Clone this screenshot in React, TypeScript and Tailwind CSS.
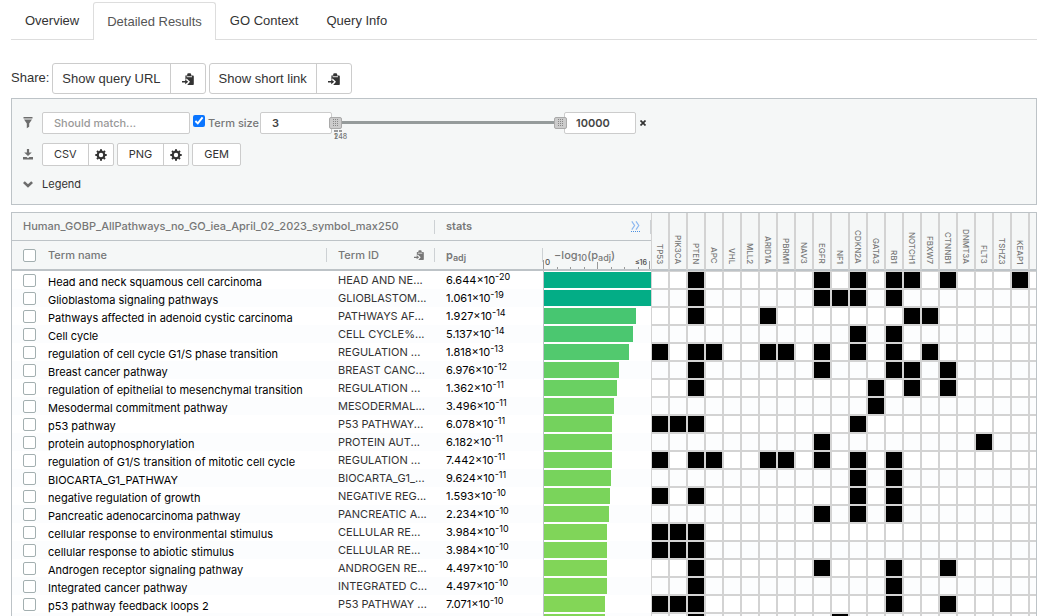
import React, { useState } from 'react';

const genes = [
  'TP53', 'PIK3CA', 'PTEN', 'APC', 'VHL', 'MLL2', 'ARID1A', 'PBRM1', 'NAV3', 'EGFR', 'NF1',
  'CDKN2A', 'GATA3', 'RB1', 'NOTCH1', 'FBXW7', 'CTNNB1', 'DNMT3A', 'FLT3', 'TSHZ3', 'KEAP1',
];

type Row = {
  name: string;
  id: string;
  mantissa: number;
  exponent: number;
  color: string;
  hits: string[];
};

const rows: Row[] = [
  { name: 'Head and neck squamous cell carcinoma', id: 'HEAD AND NE...', mantissa: 6.644, exponent: 20, color: '#03ad86', hits: ['PTEN', 'EGFR', 'CDKN2A', 'RB1', 'NOTCH1', 'CTNNB1', 'KEAP1'] },
  { name: 'Glioblastoma signaling pathways', id: 'GLIOBLASTOM...', mantissa: 1.061, exponent: 19, color: '#03ad86', hits: ['PTEN', 'EGFR', 'NF1', 'CDKN2A', 'RB1'] },
  { name: 'Pathways affected in adenoid cystic carcinoma', id: 'PATHWAYS AF...', mantissa: 1.927, exponent: 14, color: '#47c671', hits: ['PTEN', 'ARID1A', 'NOTCH1', 'FBXW7'] },
  { name: 'Cell cycle', id: 'CELL CYCLE%...', mantissa: 5.137, exponent: 14, color: '#4bc770', hits: ['CDKN2A', 'RB1'] },
  { name: 'regulation of cell cycle G1/S phase transition', id: 'REGULATION ...', mantissa: 1.818, exponent: 13, color: '#52c96e', hits: ['TP53', 'PTEN', 'APC', 'ARID1A', 'PBRM1', 'EGFR', 'CDKN2A', 'RB1', 'FBXW7'] },
  { name: 'Breast cancer pathway', id: 'BREAST CANC...', mantissa: 6.976, exponent: 12, color: '#66ce63', hits: ['PTEN', 'EGFR', 'RB1', 'NOTCH1', 'CTNNB1'] },
  { name: 'regulation of epithelial to mesenchymal transition', id: 'REGULATION ...', mantissa: 1.362, exponent: 11, color: '#6ad062', hits: ['PTEN', 'GATA3', 'NOTCH1', 'CTNNB1'] },
  { name: 'Mesodermal commitment pathway', id: 'MESODERMAL...', mantissa: 3.496, exponent: 11, color: '#70d160', hits: ['GATA3'] },
  { name: 'p53 pathway', id: 'P53 PATHWAY...', mantissa: 6.078, exponent: 11, color: '#74d25d', hits: ['TP53', 'PIK3CA', 'PTEN', 'CDKN2A'] },
  { name: 'protein autophosphorylation', id: 'PROTEIN AUT...', mantissa: 6.182, exponent: 11, color: '#74d25d', hits: ['EGFR', 'FLT3'] },
  { name: 'regulation of G1/S transition of mitotic cell cycle', id: 'REGULATION ...', mantissa: 7.442, exponent: 11, color: '#76d35d', hits: ['TP53', 'PTEN', 'APC', 'ARID1A', 'PBRM1', 'EGFR', 'CDKN2A', 'RB1'] },
  { name: 'BIOCARTA_G1_PATHWAY', id: 'BIOCARTA_G1_...', mantissa: 9.624, exponent: 11, color: '#77d35c', hits: ['CDKN2A', 'RB1'] },
  { name: 'negative regulation of growth', id: 'NEGATIVE REG...', mantissa: 1.593, exponent: 10, color: '#7ad45b', hits: ['TP53', 'PTEN', 'CDKN2A', 'RB1'] },
  { name: 'Pancreatic adenocarcinoma pathway', id: 'PANCREATIC A...', mantissa: 2.234, exponent: 10, color: '#7cd45a', hits: ['EGFR', 'CDKN2A', 'RB1'] },
  { name: 'cellular response to environmental stimulus', id: 'CELLULAR RE...', mantissa: 3.984, exponent: 10, color: '#80d559', hits: ['TP53', 'PIK3CA', 'PTEN'] },
  { name: 'cellular response to abiotic stimulus', id: 'CELLULAR RE...', mantissa: 3.984, exponent: 10, color: '#80d559', hits: ['TP53', 'PIK3CA', 'PTEN'] },
  { name: 'Androgen receptor signaling pathway', id: 'ANDROGEN RE...', mantissa: 4.497, exponent: 10, color: '#81d558', hits: ['PTEN', 'EGFR', 'RB1', 'CTNNB1'] },
  { name: 'Integrated cancer pathway', id: 'INTEGRATED C...', mantissa: 4.497, exponent: 10, color: '#81d558', hits: ['PTEN', 'RB1'] },
  { name: 'p53 pathway feedback loops 2', id: 'P53 PATHWAY ...', mantissa: 7.071, exponent: 10, color: '#83d657', hits: ['TP53', 'PIK3CA', 'PTEN', 'RB1', 'CTNNB1'] },
  { name: '', id: '', mantissa: 7.071, exponent: 10, color: '#83d657', hits: ['PTEN', 'NF1'] },
];

const tabs = ['Overview', 'Detailed Results', 'GO Context', 'Query Info'];

function PasteIcon({ className }: { className: string }) {
  return (
    <svg viewBox="0 0 12 12" className={className} fill="currentColor" aria-hidden="true">
      <path d="M3.4 2.4h1.8V1.6a1.3 1.3 0 0 1 1.3-1.3h1.4a1.3 1.3 0 0 1 1.3 1.3v.8H11a.8.8 0 0 1 .8.8v8a.8.8 0 0 1-.8.8H5.2L8 8.8 4.4 5.2v1.2h-1z" />
      <path d="M0 8h3.2V6.4l3 2.4-3 2.4V9.6H0z" />
      <path d="M4.6 3.3h5.4v.9H4.6z" fill="#fff" />
    </svg>
  );
}

function GearIcon() {
  return (
    <svg viewBox="-6 -6 12 12" className="size-3" fill="none" stroke="currentColor" aria-hidden="true">
      <circle r="3.3" strokeWidth="2.2" />
      <path
        d="M0-3.8v-1.9M0 3.8v1.9M-3.8 0h-1.9M3.8 0h1.9M-2.7-2.7L-4-4M2.7 2.7L4 4M-2.7 2.7L-4 4M2.7-2.7L4-4"
        strokeWidth="2"
      />
    </svg>
  );
}

function ShareButton({ label }: { label: string }) {
  return (
    <div className="flex h-[31px] rounded-[3px] border border-[#ccc] bg-white text-[#333]">
      <button className="px-[9px]">{label}</button>
      <button aria-label={`Copy: ${label}`} className="flex w-[35px] items-center justify-center border-l border-[#ccc]">
        <PasteIcon className="size-3" />
      </button>
    </div>
  );
}

function ExportButton({ label, settings }: { label: string; settings?: boolean }) {
  return (
    <div className="flex h-[23px] rounded-[2px] border border-[#ccc] bg-white text-[#333]">
      <button className="px-[11px]">{label}</button>
      {settings && (
        <button aria-label={`${label} settings`} className="flex w-[25px] items-center justify-center border-l border-[#ccc]">
          <GearIcon />
        </button>
      )}
    </div>
  );
}

const rangeClass =
  'pointer-events-none absolute inset-x-0 top-0 h-3 w-full appearance-none bg-transparent [&::-webkit-slider-thumb]:pointer-events-auto [&::-webkit-slider-thumb]:h-3 [&::-webkit-slider-thumb]:w-[13px] [&::-webkit-slider-thumb]:appearance-none [&::-webkit-slider-thumb]:rounded-[2px] [&::-webkit-slider-thumb]:border [&::-webkit-slider-thumb]:border-[#aaa] [&::-webkit-slider-thumb]:bg-[#ccc]';

const boxClass = 'block size-[13px] appearance-none rounded-[2px] border border-[#a3afb0] bg-white checked:bg-[#0a75ff]';

function Grip({ className }: { className: string }) {
  return (
    <svg viewBox="0 0 13 12" className={className} fill="#888" aria-hidden="true">
      <path d="M4 2h1v1H4zM6 2h1v1H6zM8 2h1v1H8zM4 4h1v1H4zM6 4h1v1H6zM8 4h1v1H8zM4 6h1v1H4zM6 6h1v1H6zM8 6h1v1H8zM4 8h1v1H4zM6 8h1v1H6zM8 8h1v1H8z" />
    </svg>
  );
}

function Divider() {
  return <span className="absolute right-0 top-[7px] h-[14px] w-px bg-[#cdd1d4]" />;
}

export default function App() {
  const [low, setLow] = useState(3);
  const [high, setHigh] = useState(10000);
  return (
    <div className="flex h-screen flex-col overflow-hidden bg-white pl-[11px] pr-5 font-['Liberation_Sans',Arial,sans-serif] text-[13px] text-[#333]">
      <nav className="flex h-10 shrink-0 items-end border-b border-[#ddd] pt-[2px]">
        {tabs.map((t) => (
          <a
            key={t}
            href="#"
            className={
              t === 'Detailed Results'
                ? '-mb-px flex h-[38px] items-center rounded-t-[3px] border border-b-0 border-[#ddd] bg-white px-[13px] text-[#555]'
                : 'flex h-[37px] items-center px-[14px]'
            }
          >
            {t}
          </a>
        ))}
      </nav>

      <div className="mt-[23px] flex shrink-0 items-center gap-[3px]">
        <span className="pb-[2px]">Share:</span>
        <ShareButton label="Show query URL" />
        <ShareButton label="Show short link" />
      </div>

      <section className="mt-1 flex h-[107px] shrink-0 flex-col border border-[#bdc3c7] bg-[#f5f7f7] px-[11px] pt-[13px] font-['Inter',sans-serif] text-[11px]">
        <div className="flex h-[22px] items-center">
          <svg viewBox="0 0 10 12" className="h-3 w-[10px] text-[#6d6d6d]" fill="currentColor" aria-hidden="true">
            <path d="M.5 0h9v1.6h-9zM1 2.6h8L6.2 6.6V9.8L3.8 11.2V6.6z" />
          </svg>
          <input
            aria-label="Filter terms"
            placeholder="Should match..."
            className="ml-[9px] h-[22px] w-[148px] rounded-[2px] border border-[#ccc] bg-white px-[11px] font-medium placeholder:text-[#999]"
          />
          <label className="ml-[3px] flex items-center gap-[3px] font-medium text-[#777]">
            <input type="checkbox" defaultChecked className="mb-1 size-3 accent-[#0a75ff]" />
            Term size
          </label>
          <input
            aria-label="Minimum term size"
            value={low}
            onChange={(e) => setLow(Number(e.target.value))}
            className="ml-px h-[22px] w-[72px] rounded-[2px] border border-[#ccc] bg-white px-[11px] font-semibold text-[#444]"
          />
          <div className="relative z-10 -mx-[3px] h-3 w-[238px]">
            <div className="absolute inset-x-1 top-1 h-[3px] bg-[#959b9b]" />
            <input type="range" aria-label="Smallest size" min={3} max={10000} value={low} onChange={(e) => setLow(Number(e.target.value))} className={rangeClass} />
            <input type="range" aria-label="Largest size" min={3} max={10000} value={high} onChange={(e) => setHigh(Number(e.target.value))} className={rangeClass} />
            <Grip className="pointer-events-none absolute left-0 top-0 h-3 w-[13px]" />
            <Grip className="pointer-events-none absolute right-0 top-0 h-3 w-[13px]" />
            <span className="absolute left-[5px] top-[13px] h-[2px] w-1 bg-[#999]" />
            <span className="absolute left-[10px] top-[13px] h-[2px] w-[3px] bg-[#999]" />
            <span className="absolute left-[5px] top-4 text-[7px] leading-2 text-[#555]">1</span>
            <span className="absolute left-[5px] top-4 text-[7px] font-medium leading-2 text-[#777]">248</span>
          </div>
          <input
            aria-label="Maximum term size"
            value={high}
            onChange={(e) => setHigh(Number(e.target.value))}
            className="h-[22px] w-[72px] rounded-[2px] border border-[#ccc] bg-white px-[11px] font-semibold text-[#444]"
          />
          <button aria-label="Reset filter" className="ml-1">
            <svg viewBox="0 0 6 6" className="size-[6px]" stroke="#333" strokeWidth="1.7" aria-hidden="true">
              <path d="M.5.5l5 5M5.5.5l-5 5" />
            </svg>
          </button>
        </div>
        <div className="mt-[9px] flex h-[23px] items-center">
          <svg viewBox="0 0 10 11" className="h-[11px] w-[10px] text-[#6d6d6d]" fill="currentColor" aria-hidden="true">
            <path d="M3.9 0h2.2v3.4h2.7L5 7 1.2 3.4h2.7zM0 8h3.6L5 9.2 6.4 8H10v2.6H0z" />
          </svg>
          <div className="ml-[9px] flex gap-[3px]">
            <ExportButton label="CSV" settings />
            <ExportButton label="PNG" settings />
            <ExportButton label="GEM" />
          </div>
        </div>
        <button className="mt-[10px] flex h-4 items-center gap-[9px]">
          <svg viewBox="0 0 10 7" className="h-[7px] w-[10px]" fill="none" stroke="#6d6d6d" strokeWidth="2.6" aria-hidden="true">
            <path d="M.9 1.1L5 5l4.1-3.9" />
          </svg>
          Legend
        </button>
      </section>

      <main className="mt-[7px] min-h-0 flex-1 overflow-hidden border border-b-0 border-[#bdc3c7] font-['Inter',sans-serif] text-[11px]">
        <table className="w-full table-fixed border-separate border-spacing-0 whitespace-nowrap">
          <colgroup>
            <col className="w-[26px]" />
            <col className="w-[289px]" />
            <col className="w-[108px]" />
            <col className="w-[108px]" />
            <col className="w-[108px]" />
            {genes.map((g) => (
              <col key={g} className="w-[18px]" />
            ))}
            <col />
          </colgroup>
          <thead className="bg-[#f5f7f7] text-left text-[#777]">
            <tr className="h-7">
              <th colSpan={3} className="relative border-b border-[#bdc3c7] p-0 pl-[11px] font-medium">
                Human_GOBP_AllPathways_no_GO_iea_April_02_2023_symbol_max250
                <Divider />
              </th>
              <th colSpan={2} className="relative border-b border-[#bdc3c7] p-0 font-semibold">
                <div className="flex items-center justify-between pl-[11px] pr-[11px]">
                  stats
                  <a href="#" aria-label="Expand stats" className="border-b border-dotted border-[#4a90e2] pb-px">
                    <svg viewBox="0 0 9 9" className="size-[9px]" fill="none" stroke="#8db8f0" strokeWidth="1.2" aria-hidden="true">
                      <path d="M.8.3l2.8 4.2L.8 8.7M5 .3l2.8 4.2L5 8.7" />
                    </svg>
                  </a>
                </div>
                <Divider />
              </th>
              {genes.map((g) => (
                <th key={g} rowSpan={2} className="border-x border-b-2 border-x-[#d3d3d3] border-b-[#bdc3c7] p-0 pb-[5px] align-bottom text-[8px] font-medium leading-4">
                  <span className="block [writing-mode:vertical-rl]">{g}</span>
                </th>
              ))}
              <th rowSpan={2} className="border-b-2 border-l border-b-[#bdc3c7] border-l-[#d3d3d3] p-0" />
            </tr>
            <tr className="h-[30px]">
              <th className="border-b-2 border-[#bdc3c7] p-0 pl-[11px]">
                <input type="checkbox" aria-label="Select all terms" className={boxClass} />
              </th>
              <th className="relative border-b-2 border-[#bdc3c7] p-0 pl-[10px] font-medium">
                Term name
                <Divider />
              </th>
              <th className="relative border-b-2 border-[#bdc3c7] p-0 font-medium">
                <div className="flex items-center justify-between px-[11px]">
                  Term ID
                  <button aria-label="Copy term IDs">
                    <PasteIcon className="size-[10px]" />
                  </button>
                </div>
                <Divider />
              </th>
              <th className="relative border-b-2 border-[#bdc3c7] p-0 pl-[11px] font-semibold leading-4">
                p<sub className="text-[9px]">adj</sub>
                <Divider />
              </th>
              <th className="relative border-b-2 border-[#bdc3c7] p-0 pl-[11px] font-medium leading-4">
                −log<sub className="text-[9px]">10</sub>(p<sub className="text-[9px]">adj</sub>)
                <svg viewBox="0 0 108 9" className="absolute bottom-0 left-0 h-[9px] w-[108px]" stroke="#999" aria-hidden="true">
                  <path d="M.5 0v9M14.5 7v2M27.5 7v2M41.5 7v2M54.5 2v7M68.5 7v2M81.5 7v2M95.5 7v2M106.5 1v8" />
                </svg>
                <span className="absolute bottom-[3px] left-[2px] text-[8px] leading-[7px] text-[#555]">0</span>
                <span className="absolute bottom-[3px] right-1 text-[7px] font-semibold leading-[7px] text-[#555]">≤16</span>
              </th>
            </tr>
          </thead>
          <tbody>
            {rows.map((r, i) => (
              <tr key={i} className="h-[18px] leading-4 even:bg-[#fcfdfe]">
                <td className="p-0 pl-[11px]">
                  <input type="checkbox" aria-label={r.name || 'Select term'} className={boxClass} />
                </td>
                <td className="p-0 pl-[10px] align-bottom text-black">
                  <div className="h-[15px] overflow-hidden text-ellipsis">{r.name}</div>
                </td>
                <td className="p-0 pl-[11px]">
                  <div className="h-4">{r.id}</div>
                </td>
                <td className="p-0 pl-[11px] text-black">
                  {r.id && (
                    <div className="h-4">
                      {r.mantissa}×10<sup className="text-[9px] leading-none">-{r.exponent}</sup>
                    </div>
                  )}
                </td>
                <td className="border-l border-[#bdc3c7] p-0">
                  <div
                    className="h-4"
                    style={{
                      width: `${Math.min(100, ((r.exponent - Math.log10(r.mantissa)) / 16) * 100)}%`,
                      backgroundColor: r.color,
                    }}
                  />
                </td>
                {genes.map((g) => (
                  <td key={g} className={r.hits.includes(g) ? 'border border-[#d3d3d3] bg-black bg-clip-padding p-0' : 'border border-[#d3d3d3] p-0'} />
                ))}
                <td className="border border-r-0 border-[#d3d3d3] p-0" />
              </tr>
            ))}
          </tbody>
        </table>
      </main>
    </div>
  );
}
